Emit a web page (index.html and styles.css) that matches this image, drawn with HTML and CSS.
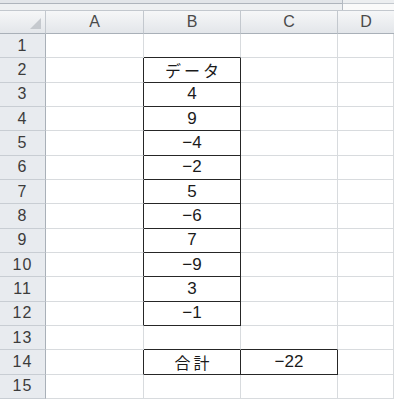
FILE: index.html
```html
<!DOCTYPE html>
<html lang="ja">
<head>
  <meta charset="UTF-8" />
  <meta name="viewport" content="width=device-width, initial-scale=1.0"/>
  <title>データ - 合計</title>
  <link rel="stylesheet" href="styles.css">
</head>
<body>

  <div class="topbar">
    <div class="bar-left"></div>
    <div class="bar-right"></div>
  </div>

  <div class="sheet">
    <!-- column headers -->
    <div class="corner"></div>
    <div class="colhead">A</div>
    <div class="colhead">B</div>
    <div class="colhead">C</div>
    <div class="colhead last">D</div>

    <div class="rowhead">1</div>
    <div class="cell"></div><div class="cell above"></div><div class="cell"></div><div class="cell"></div>

    <div class="rowhead">2</div>
    <div class="cell left-of"></div><div class="cell box jp">データ</div><div class="cell"></div><div class="cell"></div>

    <div class="rowhead">3</div>
    <div class="cell left-of"></div><div class="cell box">4</div><div class="cell"></div><div class="cell"></div>

    <div class="rowhead">4</div>
    <div class="cell left-of"></div><div class="cell box">9</div><div class="cell"></div><div class="cell"></div>

    <div class="rowhead">5</div>
    <div class="cell left-of"></div><div class="cell box">−4</div><div class="cell"></div><div class="cell"></div>

    <div class="rowhead">6</div>
    <div class="cell left-of"></div><div class="cell box">−2</div><div class="cell"></div><div class="cell"></div>

    <div class="rowhead">7</div>
    <div class="cell left-of"></div><div class="cell box">5</div><div class="cell"></div><div class="cell"></div>

    <div class="rowhead">8</div>
    <div class="cell left-of"></div><div class="cell box">−6</div><div class="cell"></div><div class="cell"></div>

    <div class="rowhead">9</div>
    <div class="cell left-of"></div><div class="cell box">7</div><div class="cell"></div><div class="cell"></div>

    <div class="rowhead">10</div>
    <div class="cell left-of"></div><div class="cell box">−9</div><div class="cell"></div><div class="cell"></div>

    <div class="rowhead">11</div>
    <div class="cell left-of"></div><div class="cell box">3</div><div class="cell"></div><div class="cell"></div>

    <div class="rowhead">12</div>
    <div class="cell left-of"></div><div class="cell box">−1</div><div class="cell"></div><div class="cell"></div>

    <div class="rowhead">13</div>
    <div class="cell"></div><div class="cell above"></div><div class="cell above"></div><div class="cell"></div>

    <div class="rowhead">14</div>
    <div class="cell left-of"></div><div class="cell box jp">合計</div><div class="cell box">−22</div><div class="cell"></div>

    <div class="rowhead">15</div>
    <div class="cell"></div><div class="cell"></div><div class="cell"></div><div class="cell"></div>
  </div>

</body>
</html>
```

FILE: styles.css
```css
* {
  box-sizing: border-box;
}

body {
  margin: 0;
  background: #ffffff;
  font-family: "Liberation Sans", "Noto Sans CJK JP", sans-serif;
  overflow: hidden;
}

.topbar {
  display: flex;
  height: 10px;
}

.bar-left {
  flex: 0 0 343px;
  border-right: 1px solid #b4bac2;
  background: linear-gradient(#e2e5e9 0 3px, #aeb4bc 3px 4px, #eef0f2 4px);
}

.bar-right {
  flex: 1;
  background: linear-gradient(#eceef0 0 3px, #c4c9cf 3px 4px, #fafafa 4px);
}

.sheet {
  display: grid;
  grid-template-columns: 46px 98px 97px 97px 1fr;
  grid-template-rows: 24px repeat(15, 24.33px);
}

.corner,
.colhead {
  background: linear-gradient(#f6f7f8, #e3e6ea);
  border-right: 1px solid #c3c8ce;
  border-bottom: 1px solid #a9b0b8;
  border-top: 1px solid #c3c8ce;
}

.corner {
  position: relative;
}

.corner::after {
  content: "";
  position: absolute;
  right: 4px;
  bottom: 4px;
  border-left: 11px solid transparent;
  border-bottom: 11px solid #c5c9ce;
}

.colhead {
  display: flex;
  align-items: center;
  justify-content: center;
  font-size: 16px;
  color: #4a4a4a;
}

.colhead.last {
  border-right: none;
}

.rowhead {
  display: flex;
  align-items: center;
  justify-content: center;
  background: #e8ebef;
  border-right: 1px solid #a9b0b8;
  border-bottom: 1px solid #c8cdd3;
  font-size: 16px;
  color: #3c3c3c;
  letter-spacing: 1px;
}

.cell {
  display: flex;
  align-items: center;
  justify-content: center;
  border-right: 1px solid #d8dbde;
  border-bottom: 1px solid #d8dbde;
  font-size: 17px;
  color: #1a1a1a;
}

.cell.box {
  border-right-color: #262626;
  border-bottom-color: #262626;
}

.cell.above {
  border-bottom-color: #262626;
}

.cell.left-of {
  border-right-color: #262626;
}

.jp {
  font-family: "Noto Sans CJK JP", sans-serif;
  font-size: 16px;
  letter-spacing: 3px;
  padding-left: 3px;
}
```
